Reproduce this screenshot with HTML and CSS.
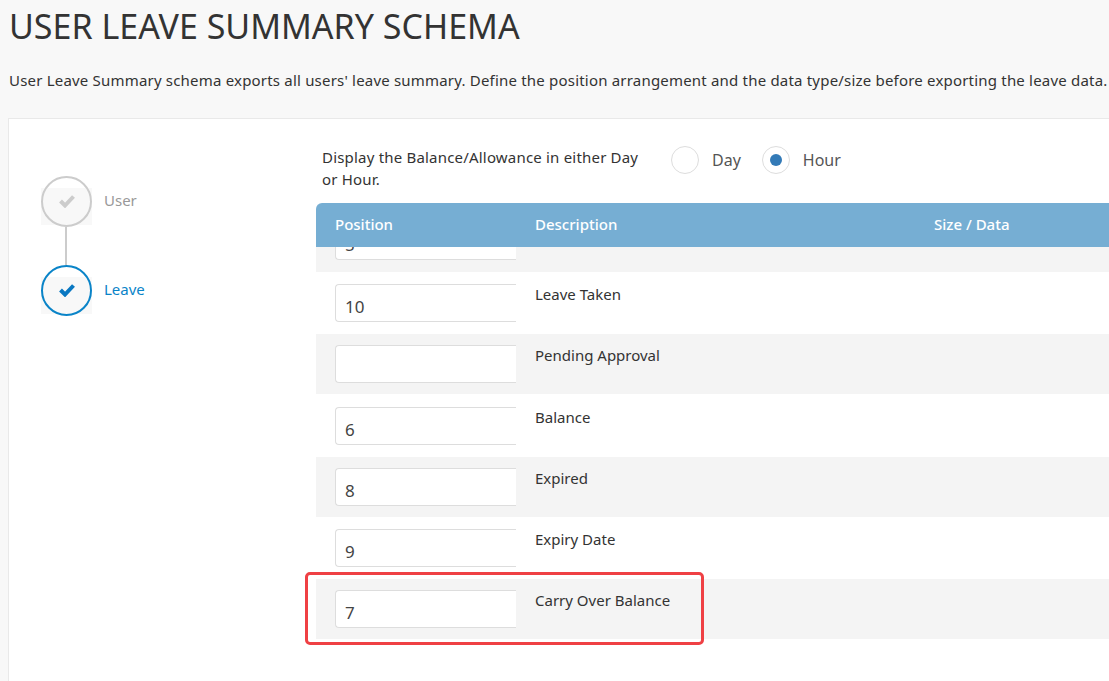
FILE: index.html
```html
<!DOCTYPE html>
<html lang="en">
<head>
<meta charset="utf-8">
<title>User Leave Summary Schema</title>
<link rel="stylesheet" href="styles.css">
</head>
<body>
<main class="page">
  <h1 class="title">USER LEAVE SUMMARY SCHEMA</h1>
  <p class="intro">User Leave Summary schema exports all users' leave summary. Define the position arrangement and the data type/size before exporting the leave data.</p>
  <section class="panel">
    <nav class="steps">
      <div class="step step-done">
        <span class="step-icon"><span class="step-circle"><svg class="check" viewBox="0 0 16 14"><path d="M1.500 7l4.500 4.500L14.500 2.500" fill="none" stroke="currentColor" stroke-width="4"/></svg></span></span>
        <span class="step-label">User</span>
      </div>
      <div class="step-line"></div>
      <div class="step step-active">
        <span class="step-icon"><span class="step-circle"><svg class="check" viewBox="0 0 16 14"><path d="M1.500 7l4.500 4.500L14.500 2.500" fill="none" stroke="currentColor" stroke-width="4"/></svg></span></span>
        <span class="step-label">Leave</span>
      </div>
    </nav>
    <div class="content">
      <div class="unit-row">
        <p class="unit-text">Display the Balance/Allowance in either Day or Hour.</p>
        <div class="radios">
          <span class="radio"></span><span class="radio-label">Day</span>
          <span class="radio radio-on"></span><span class="radio-label">Hour</span>
        </div>
      </div>
      <div class="table">
        <div class="thead">
          <span class="col-pos">Position</span>
          <span class="col-desc">Description</span>
          <span class="col-size">Size / Data</span>
        </div>
        <div class="row row-alt row-cut"><div class="col-pos"><input class="pos-input" value="5" readonly></div></div>
        <div class="row r62"><div class="col-pos"><input class="pos-input" value="10" readonly></div><div class="col-desc">Leave Taken</div></div>
        <div class="row row-alt r60"><div class="col-pos"><input class="pos-input" value="" readonly></div><div class="col-desc">Pending Approval</div></div>
        <div class="row r63"><div class="col-pos"><input class="pos-input" value="6" readonly></div><div class="col-desc">Balance</div></div>
        <div class="row row-alt r60"><div class="col-pos"><input class="pos-input" value="8" readonly></div><div class="col-desc">Expired</div></div>
        <div class="row r62"><div class="col-pos"><input class="pos-input" value="9" readonly></div><div class="col-desc">Expiry Date</div></div>
        <div class="row row-alt r60 row-marked"><div class="col-pos"><input class="pos-input" value="7" readonly></div><div class="col-desc">Carry Over Balance</div><span class="marker"></span></div>
      </div>
    </div>
  </section>
</main>
</body>
</html>
```
FILE: styles.css
```css
html, body {
  margin: 0;
  height: 100%;
  overflow: hidden;
  background: #f8f8f8;
}
body {
  font-family: "Noto Sans", "Open Sans", sans-serif;
  color: #333;
}
.page {
  display: flex;
  flex-direction: column;
  height: 100%;
  padding-left: 8px;
  box-sizing: border-box;
}
.title {
  margin: 0;
  padding: 5px 0 0 1px;
  font-size: 34px;
  line-height: 42px;
  font-weight: 400;
  white-space: nowrap;
}
.intro {
  margin: 0;
  padding: 22px 0 0 1px;
  font-size: 15px;
  line-height: 22px;
  letter-spacing: 0.195px;
  white-space: nowrap;
}
.panel {
  display: flex;
  flex: 1;
  min-height: 0;
  margin-top: 27px;
  background: #fff;
  border: 1px solid #e9e9e9;
  border-width: 1px 0 0 1px;
}
.steps {
  width: 307px;
  flex: none;
  padding: 57px 0 0 32px;
  box-sizing: border-box;
}
.step {
  display: flex;
  align-items: center;
  gap: 12px;
  font-size: 15px;
}
.step-icon {
  width: 51px;
  height: 51px;
  flex: none;
  background: linear-gradient(#fff 12px, #f8f8f8 12px, #f8f8f8 49px, #fff 49px);
}
.step-circle {
  width: 51px;
  height: 51px;
  box-sizing: border-box;
  padding-bottom: 1px;
  border-radius: 50%;
  border: 2px solid;
  display: flex;
  align-items: center;
  justify-content: center;
}
.step-label { padding-bottom: 4px; }
.step-done .step-circle { border-color: #ccc; color: #ccc; }
.step-done .step-label { color: #999; }
.step-active .step-circle { border-color: #0a84c8; color: #0a78c2; }
.step-active .step-label { color: #0a84c8; }
.check { width: 16px; height: 14px; }
.step-line {
  width: 2px;
  height: 38px;
  margin-left: 24px;
  background: #ccc;
}
.content {
  flex: 1;
  min-width: 0;
}
.unit-row {
  display: flex;
  align-items: flex-start;
  padding: 27px 0 0 6px;
  height: 66px;
  box-sizing: border-box;
  margin-bottom: 18px;
}
.unit-text {
  margin: 0;
  width: 349px;
  padding-right: 27px;
  box-sizing: border-box;
  font-size: 15px;
  line-height: 22px;
  letter-spacing: 0.195px;
}
.radios {
  display: flex;
  align-items: center;
  height: 46px;
  margin-top: -9px;
  font-size: 16px;
  color: #555;
}
.radio {
  width: 28px;
  height: 28px;
  box-sizing: border-box;
  border: 1px solid #ddd;
  border-radius: 50%;
  background: #fff;
  display: flex;
  align-items: center;
  justify-content: center;
  margin-right: 13px;
}
.radio-on::after {
  content: "";
  width: 12px;
  height: 12px;
  border-radius: 50%;
  background: #337ab7;
}
.radio-label { margin-right: 21px; }
.table { font-size: 15px; }
.thead {
  display: flex;
  align-items: center;
  height: 44px;
  padding-bottom: 2px;
  box-sizing: border-box;
  background: #76aed3;
  color: #fff;
  font-weight: 500;
  border-radius: 6px 0 0 0;
}
.col-pos { width: 219px; padding-left: 19px; box-sizing: border-box; flex: none; }
.col-desc { width: 399px; flex: none; }
.row {
  display: flex;
  align-items: flex-start;
  background: #fff;
}
.row .col-desc { margin-top: -2px; line-height: 24px; }
.r62 { height: 62px; padding-top: 12px; box-sizing: border-box; }
.r63 { height: 63px; padding-top: 13px; box-sizing: border-box; }
.r60 { height: 60px; padding-top: 11px; box-sizing: border-box; }
.row-alt { background: #f4f4f4; }
.row-cut { height: 25px; overflow: hidden; align-items: flex-end; padding-bottom: 12px; box-sizing: border-box; }
.pos-input {
  display: block;
  width: 181px;
  height: 38px;
  box-sizing: border-box;
  border: 1px solid #ddd;
  border-right: 0;
  border-radius: 4px 0 0 4px;
  padding: 7px 9px 0;
  background: #fff;
  font-family: inherit;
  font-size: 17px;
  color: #444;
  outline: none;
}
.row-marked { position: relative; }
.marker {
  position: absolute;
  left: -11px;
  top: -7px;
  width: 399px;
  height: 73px;
  box-sizing: border-box;
  border: 3px solid #ef4044;
  border-radius: 5px;
}
```
